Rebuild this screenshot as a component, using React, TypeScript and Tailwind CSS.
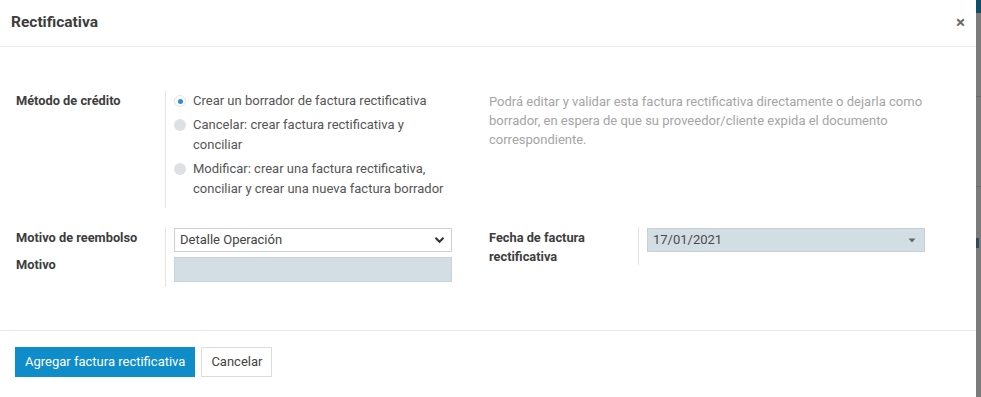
import React from "react";

const font = { fontFamily: "Roboto, 'Noto Sans', Arial, sans-serif" };

function Radio({ checked, children }: { checked?: boolean; children: React.ReactNode }) {
  return (
    <div className="flex items-start gap-[7px]">
      <div className="h-[20px] flex items-center shrink-0">
        {checked ? (
          <div className="w-[12px] h-[12px] rounded-full bg-white border border-[#dfe3e8] flex items-center justify-center">
            <div className="w-[5px] h-[5px] rounded-full bg-[#2a8fd0]" />
          </div>
        ) : (
          <div className="w-[12px] h-[12px] rounded-full bg-[#dde1e6]" />
        )}
      </div>
      <div className="leading-[20px]">{children}</div>
    </div>
  );
}

export default function App() {
  return (
    <div className="flex w-[981px] h-[397px] overflow-hidden bg-white text-[#4c4c4c]" style={font}>
      <div className="w-[976px] h-full flex flex-col bg-white">
        {/* Header */}
        <div className="h-[47px] shrink-0 border-b border-[#e9e9e9] flex items-center justify-between pl-[11px] pr-[11px]">
          <div className="text-[15.5px] font-bold text-[#3d3d3d]">Rectificativa</div>
          <div className="text-[17px] font-bold text-[#6b6b6b] leading-none -mt-[2px]">×</div>
        </div>
        {/* Body */}
        <div className="flex-1 border-b border-[#e9e9e9] pl-[16px] pt-[43px] text-[13px]">
          {/* Row 1 */}
          <div className="flex">
            <div className="w-[473px] flex">
              <div className="w-[149px] pt-[1px] font-bold text-[12.8px] text-[#3d3d3d] leading-[20px]">Método de crédito</div>
              <div className="flex-1 border-l border-[#e4e4e4] pl-[8px] pt-[1px] pb-[9px] flex flex-col gap-[4px] text-[13px] text-[#555]">
                <Radio checked>Crear un borrador de factura rectificativa</Radio>
                <Radio>
                  Cancelar: crear factura rectificativa y
                  <br />
                  conciliar
                </Radio>
                <Radio>
                  Modificar: crear una factura rectificativa,
                  <br />
                  conciliar y crear una nueva factura borrador
                </Radio>
              </div>
            </div>
            <div className="w-[460px] pt-[2px] text-[13px] leading-[19px] text-[#a5a5a5]">
              Podrá editar y validar esta factura rectificativa directamente o dejarla como borrador, en espera de que su proveedor/cliente expida el documento correspondiente.
            </div>
          </div>
          {/* Row 2 */}
          <div className="flex mt-[19px]">
            <div className="w-[473px] flex">
              <div className="w-[149px] flex flex-col font-bold text-[12.8px] text-[#3d3d3d]">
                <div className="h-[25px] leading-[20px] pt-[1px]">Motivo de reembolso</div>
                <div className="leading-[20px] pt-[3px]">Motivo</div>
              </div>
              <div className="flex-1 border-l border-[#e4e4e4] pl-[8px] pt-[1px] pb-[5px] flex flex-col gap-[5px]">
                <div className="w-[278px] h-[24px] border border-[#cfcfcf] bg-white flex items-center justify-between pl-[5px] pr-[6px] text-[13px] text-[#444]">
                  <span>Detalle Operación</span>
                  <svg width="11" height="8" viewBox="0 0 11 8">
                    <path d="M1.5 1.8 L5.5 5.8 L9.5 1.8" fill="none" stroke="#333" strokeWidth="2" />
                  </svg>
                </div>
                <div className="w-[278px] h-[25px] bg-[#d3dee4] border border-[#c8d3d9]" />
              </div>
            </div>
            <div className="w-[473px] flex">
              <div className="w-[149px] font-bold text-[12.8px] text-[#3d3d3d] leading-[19px] pt-[1px]">
                Fecha de factura
                <br />
                rectificativa
              </div>
              <div className="flex-1 border-l border-[#e4e4e4] pl-[8px] pt-[1px] h-[38px]">
                <div className="w-[278px] h-[24px] bg-[#d3dee4] border border-[#c8d3d9] flex items-center justify-between pl-[5px] pr-[8px] text-[13px] text-[#4a4a4a]">
                  <span>17/01/2021</span>
                  <svg width="8" height="5" viewBox="0 0 8 5">
                    <path d="M0.5 0.5 L7.5 0.5 L4 4.5 Z" fill="#666" />
                  </svg>
                </div>
              </div>
            </div>
          </div>
        </div>
        {/* Footer */}
        <div className="h-[66px] shrink-0 flex items-start gap-[6px] pl-[15px] pt-[16px] text-[13px]">
          <button className="h-[30px] px-[10px] bg-[#0f8cca] text-white">Agregar factura rectificativa</button>
          <button className="h-[30px] px-[9px] bg-white border border-[#dcdcdc] text-[#444]">Cancelar</button>
        </div>
      </div>
      {/* backdrop strip */}
      <div className="flex-1 h-full bg-[#7b7b7b] flex flex-col">
        <div className="h-[13px] bg-[#0d4e6b]" />
        <div className="h-[83px]" />
        <div className="h-px bg-[#6c6c6c]" />
        <div className="h-[89px]" />
        <div className="h-px bg-[#6c6c6c]" />
        <div className="h-[45px]" />
        <div className="w-[3px] h-[10px] bg-[#2f4a5a] mt-[6px]" />
      </div>
    </div>
  );
}
